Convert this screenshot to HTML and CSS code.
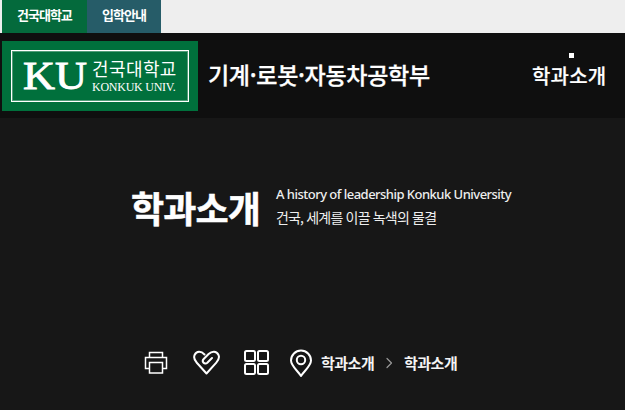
FILE: index.html
```html
<!DOCTYPE html>
<html lang="ko">
<head>
<meta charset="utf-8">
<title>학과소개</title>
<link rel="stylesheet" href="styles.css">
</head>
<body>
<nav class="topbar">
  <a class="tab tab-green">건국대학교</a>
  <a class="tab tab-blue">입학안내</a>
</nav>
<header class="header">
  <div class="logo">
    <div class="logo-frame">
      <span class="logo-ku">KU</span>
      <span class="logo-names">
        <span class="logo-ko">건국대학교</span>
        <span class="logo-en">KONKUK UNIV.</span>
      </span>
    </div>
  </div>
  <div class="dept">기계·로봇·자동차공학부</div>
  <div class="menu"><i class="dot"></i><span>학과소개</span></div>
</header>
<main class="hero">
  <section class="heading">
    <h1>학과소개</h1>
    <div class="slogan">
      <p class="slogan-en">A history of leadership Konkuk University</p>
      <p class="slogan-ko">건국, 세계를 이끌 녹색의 물결</p>
    </div>
  </section>
  <section class="crumbs">
    <svg class="printer" width="24" height="24" viewBox="0 0 24 24"><path d="M5.5 6.5V1.500h13v5M5.500 17.500h-4v-11h21v11h-4M5.500 11.500h13v10.500h-13z"/></svg>
    <svg class="heart" width="30" height="26" viewBox="0 0 30 26"><path d="M12.500 4.500C9 .6 4.500 1 2.700 4.700c-1.400 3-.2 5.500 2.100 8L14.500 23.500l9.800-10.800c2.500-2.800 3.500-5.200 2.100-8C24.500.9 20 .8 16.600 4L11.700 9c-2.500 2.500 1 6.300 3.600 3.800l4.700-4.800"/></svg>
    <svg class="grid" width="26" height="26" viewBox="0 0 26 26"><rect x="1" y="1" width="10" height="10" rx="1.500"/><rect x="14" y="1" width="10" height="10" rx="1.500"/><rect x="1" y="14" width="10" height="10" rx="1.500"/><rect x="14" y="14" width="10" height="10" rx="1.500"/></svg>
    <svg class="pin" width="23" height="28" viewBox="0 0 23 28"><path d="M11 27C8 22 1 17 1 11.500a10 10 0 0 1 20 0C21 17 14 22 11 27z"/><circle cx="11" cy="11" r="4.200"/></svg>
    <span class="crumb">학과소개</span>
    <svg class="arrow" width="7" height="12" viewBox="0 0 7 12"><path d="M1 1.500l4.500 4.500L1 10.500"/></svg>
    <span class="crumb">학과소개</span>
  </section>
</main>
</body>
</html>
```
FILE: styles.css
```css
* { box-sizing: border-box; margin: 0; padding: 0; }
body {
  width: 625px; height: 410px; overflow: hidden;
  background: #171717; color: #fff;
  font-family: "Noto Sans CJK KR", sans-serif;
  white-space: nowrap;
}
.topbar { display: flex; height: 33px; padding-left: 2px; background: #eee; }
.tab { height: 33px; padding-left: 15px; font-size: 13px; font-weight: 700; line-height: 30px; letter-spacing: -1px; }
.tab-green { width: 85px; background: #046a3c; }
.tab-blue { width: 74px; background: #265c68; }
.header { display: flex; height: 85px; padding-left: 2px; background: #0f0f0f; }
.logo { width: 196px; height: 70px; margin-top: 8px; padding: 9px; background: #00703c; }
.logo-frame { display: flex; width: 178px; height: 52px; border: 1.5px solid #fff; box-shadow: inset 0 0 0 1px #ffffff50; padding-left: 11px; }
.logo-ku { width: 69px; font: 41px/48px "Liberation Serif", serif; -webkit-text-stroke: .9px #fff; transform: scaleX(1.08); transform-origin: 0 0; }
.logo-names { display: flex; flex-direction: column; }
.logo-ko { height: 29px; font-size: 18px; font-weight: 400; line-height: 35px; letter-spacing: .4px; }
.logo-en { font: 12px/15px "Liberation Serif", serif; letter-spacing: -.25px; }
.dept { width: 323px; padding-left: 10px; font-size: 23px; font-weight: 500; line-height: 83px; letter-spacing: -.3px; -webkit-text-stroke: .3px #fff; }
.menu { display: flex; flex-direction: column; width: 80px; padding: 20px 0 0 11px; font-size: 20px; font-weight: 500; line-height: 35px; letter-spacing: .2px; -webkit-text-stroke: .2px #fff; }
.dot { width: 5px; height: 5px; margin-left: 37px; background: #fff; }
.hero { height: 292px; }
.heading { display: flex; height: 220px; padding: 64px 0 0 131px; }
h1 { width: 145px; font-size: 36px; font-weight: 700; line-height: 50px; letter-spacing: -.9px; -webkit-text-stroke: .5px #fff; }
.slogan { color: #eee; }
.slogan-en { font: 500 13px/24px "Noto Sans", sans-serif; letter-spacing: -.52px; }
.slogan-ko { font-size: 14px; line-height: 22px; letter-spacing: -.82px; }
.crumbs { display: flex; align-items: center; height: 50px; padding-left: 144px; }
svg { fill: none; stroke: #fff; stroke-width: 2; stroke-linejoin: round; stroke-linecap: round; flex: none; }
.printer { stroke-width: 1.5; stroke-linejoin: miter; }
.heart { margin-left: 24px; }
.grid { margin-left: 22px; }
.pin { margin-left: 20px; }
.crumb { width: 65px; margin-left: 8px; font-size: 15px; font-weight: 700; line-height: 30px; letter-spacing: -.5px; color: #f4f4f4; }
.arrow { stroke: #999; stroke-width: 1.2; }
.arrow + .crumb { margin-left: 11px; }
```
